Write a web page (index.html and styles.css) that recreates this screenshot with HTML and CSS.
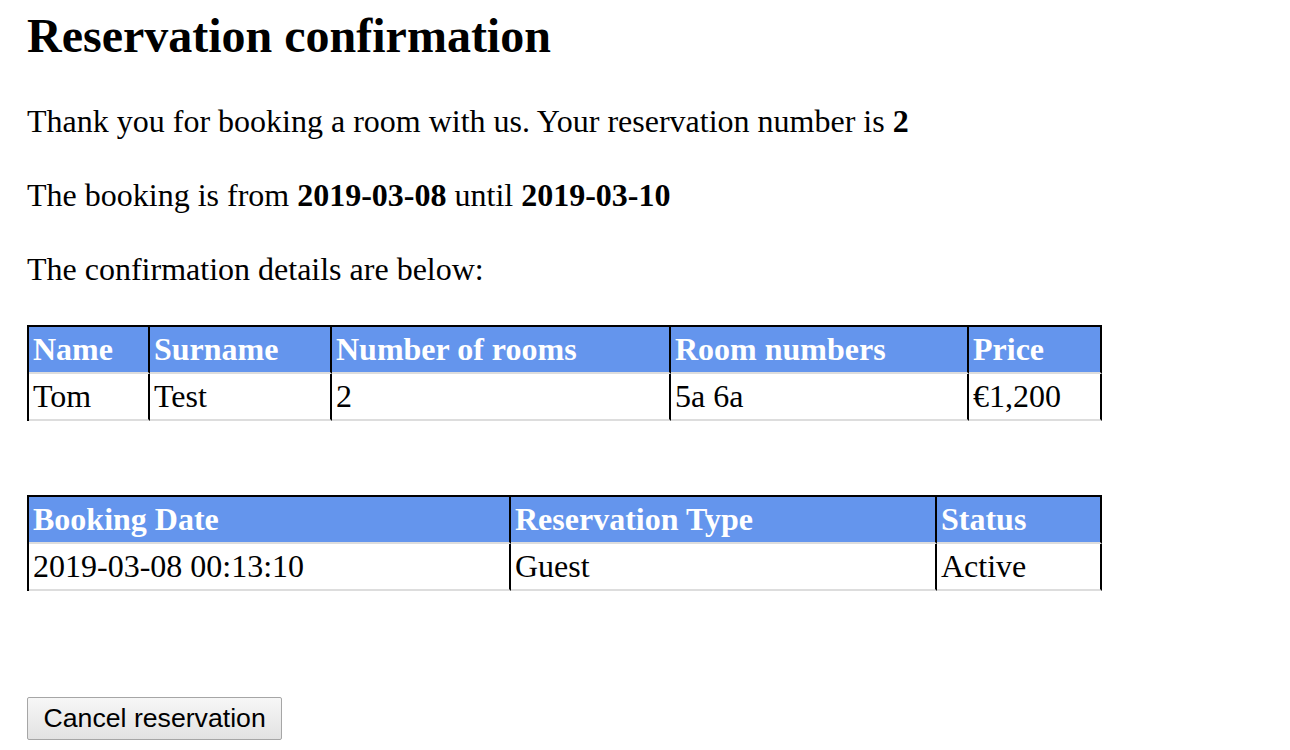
FILE: index.html
```html
<!DOCTYPE html>
<html lang="en">
<head>
<meta charset="utf-8">
<title>Reservation confirmation</title>
<link rel="stylesheet" href="styles.css">
</head>
<body>
<main class="page">
  <h2 class="title">Reservation confirmation</h2>
  <p class="line">Thank you for booking a room with us. Your reservation number is <b>2</b></p>
  <p class="line">The booking is from <b>2019-03-08</b> until <b>2019-03-10</b></p>
  <p class="line last">The confirmation details are below:</p>

  <table class="grid">
    <colgroup>
      <col class="c121"><col class="c182"><col class="c339"><col class="c298"><col class="c133">
    </colgroup>
    <thead>
      <tr><th>Name</th><th>Surname</th><th>Number of rooms</th><th>Room numbers</th><th>Price</th></tr>
    </thead>
    <tbody>
      <tr><td>Tom</td><td>Test</td><td>2</td><td>5a 6a</td><td>€1,200</td></tr>
    </tbody>
  </table>

  <table class="grid second">
    <colgroup>
      <col class="c482"><col class="c426"><col class="c165">
    </colgroup>
    <thead>
      <tr><th>Booking Date</th><th>Reservation Type</th><th>Status</th></tr>
    </thead>
    <tbody>
      <tr><td>2019-03-08 00:13:10</td><td>Guest</td><td>Active</td></tr>
    </tbody>
  </table>

  <button class="cancel" type="button">Cancel reservation</button>
</main>
</body>
</html>
```

FILE: styles.css
```css
html, body {
  margin: 0;
  padding: 0;
  background: #ffffff;
}

body {
  font-family: "Liberation Serif", "Times New Roman", serif;
  font-size: 32px;
  color: #000000;
}

.page {
  display: flex;
  flex-direction: column;
  align-items: flex-start;
  padding: 8px 0 0 27px;
}

.title {
  margin: 0 0 39px;
  font-size: 48px;
  line-height: 56px;
  font-weight: bold;
}

.line {
  margin: 0 0 37px;
  line-height: 37px;
}

.line.last {
  margin-bottom: 37px;
}

.grid {
  border-collapse: separate;
  border-spacing: 0;
  table-layout: fixed;
  width: 1075px;
  border-top: 2px solid #000000;
  border-left: 2px solid #000000;
  font-size: 32px;
}

.grid th,
.grid td {
  padding: 4px;
  text-align: left;
  vertical-align: middle;
  border-right: 2px solid #000000;
  border-bottom: 2px solid #dddddd;
  white-space: nowrap;
  line-height: normal;
}

.grid th {
  background: #6495ed;
  color: #ffffff;
  font-weight: bold;
}

.grid td {
  background: #ffffff;
}

.second {
  margin-top: 74px;
}

.c121 { width: 121px; }
.c182 { width: 182px; }
.c339 { width: 339px; }
.c298 { width: 298px; }
.c133 { width: 133px; }
.c482 { width: 482px; }
.c426 { width: 426px; }
.c165 { width: 165px; }

.cancel {
  margin-top: 106px;
  font-family: "Liberation Sans", Arial, sans-serif;
  font-size: 26.67px;
  line-height: 31px;
  padding: 5px 15.5px 5px;
  color: #000000;
  border: 1px solid #a6a6a6;
  border-radius: 2px;
  background: linear-gradient(#f7f7f7, #e2e2e2);
}
```
